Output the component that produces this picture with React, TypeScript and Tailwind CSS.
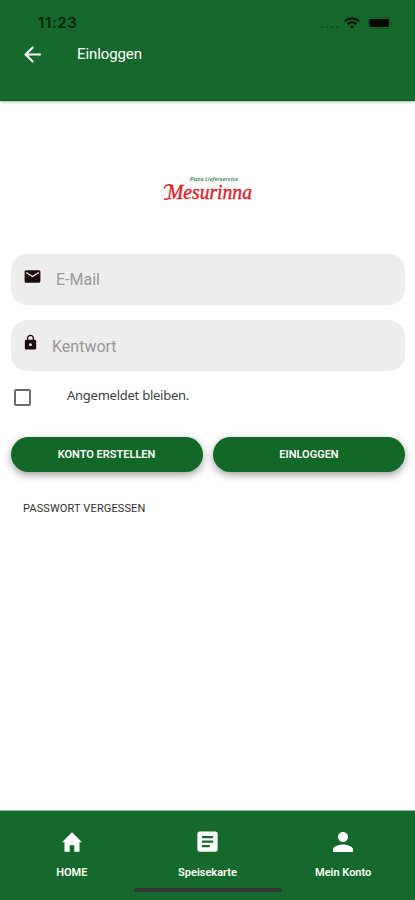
import React from 'react';
import { MdArrowBack, MdArticle, MdEmail, MdLock, MdPerson } from 'react-icons/md';

const StatusBar = () => (
  <div className="h-[37px] pt-[13px] pl-[38px] pr-[22px] flex items-start justify-between text-[#03210b]">
    <span className="text-[15px] leading-5 font-semibold font-['Inter',sans-serif] tracking-[0.6px]">11:23</span>
    <div className="flex items-center h-5">
      <div className="flex gap-[3px] mt-[7px] mr-[6px]">
        <span className="w-[2px] h-[2px] bg-[#0f5120]"></span>
        <span className="w-[2px] h-[2px] bg-[#0f5120]"></span>
        <span className="w-[2px] h-[2px] bg-[#0f5120]"></span>
        <span className="w-[2px] h-[2px] bg-[#0f5120]"></span>
      </div>
      <svg className="w-4 h-3 mr-2" viewBox="0 0 16 12" fill="none" stroke="#03150a" strokeWidth="2">
        <path d="M0.8 4.4C4.8 0.4 11.2 0.4 15.2 4.4" />
        <path d="M3.4 7.2C6 4.7 10 4.7 12.6 7.2" />
        <path d="M8 11.8L5.6 9.4C7 8.2 9 8.2 10.4 9.4Z" fill="#03150a" stroke="none" />
      </svg>
      <svg className="w-[25px] h-3" viewBox="0 0 25 12">
        <rect x="0.5" y="0.5" width="21.5" height="11" rx="3" fill="none" stroke="#11551f" />
        <rect x="1.5" y="2" width="19.5" height="8" rx="1.2" fill="#000802" />
        <path d="M23.2 4.3C24.6 5 24.6 7 23.2 7.7Z" fill="#0b4119" />
      </svg>
    </div>
  </div>
);

const Header = () => (
  <header className="h-[101px] shrink-0 bg-[#16692c] border-b border-[#0b5a20] shadow-[0_1px_3px_rgba(0,0,0,0.3)]">
    <StatusBar />
    <div className="h-[34px] pl-5 flex items-center text-white">
      <MdArrowBack className="w-[25px] h-[25px]" />
      <h1 className="ml-8 text-[15px] leading-5 tracking-[-0.1px]">Einloggen</h1>
    </div>
  </header>
);

const Logo = () => (
  <div className="w-[92px] mx-auto flex flex-col">
    <svg className="w-[92px] h-[9px] overflow-visible" viewBox="0 0 92 9">
      <text x="28" y="7" textLength="48" lengthAdjust="spacingAndGlyphs" fontFamily="Open Sans, sans-serif" fontSize="5.5" fontStyle="italic" fontWeight="600" fill="#2d7d4a">Pizza Lieferservice</text>
    </svg>
    <svg className="w-[92px] h-[23px] overflow-visible" viewBox="0 0 92 23">
      <text x="5" y="16" textLength="85" lengthAdjust="spacingAndGlyphs" fontFamily="Liberation Serif, serif" fontSize="20" fontStyle="italic" fill="#e01b2a" stroke="#e01b2a" strokeWidth="0.4">Mesurinna</text>
      <path d="M2 5.5C4 0.5 8.5 0.8 10 3.5M5.5 16C4 17 3 16.5 2 15.5" fill="none" stroke="#e01b2a" strokeWidth="1.2" />
    </svg>
  </div>
);

const tabs = [
  {
    label: 'HOME',
    icon: (
      <svg className="w-5 h-5" viewBox="0 0 20 20" fill="currentColor">
        <path d="M10 0.2L0 10.3H2.5V19.7H7.7V13.2H12.3V19.7H17.5V10.3H20Z" />
      </svg>
    ),
  },
  { label: 'Speisekarte', icon: <MdArticle className="w-[27px] h-[27px]" /> },
  { label: 'Mein Konto', icon: <MdPerson className="w-[30px] h-[30px]" /> },
];

const TabBar = () => (
  <nav className="h-[90px] shrink-0 bg-[#16692c] border-t border-[#8fb89a] flex flex-col text-white">
    <div className="grid grid-cols-3 pl-1 pr-1 pt-[15px] h-[77px]">
      {tabs.map((tab) => (
        <div key={tab.label} className="flex flex-col items-center">
          <div className="h-[31px] flex items-center">{tab.icon}</div>
          <span className="mt-2 text-[11px] leading-4 font-semibold whitespace-nowrap">{tab.label}</span>
        </div>
      ))}
    </div>
    <div className="w-[148px] h-1 mx-auto rounded-full bg-[#343638]"></div>
  </nav>
);

const App = () => {
  return (
    <div className="w-full h-[900px] flex flex-col bg-white font-['Roboto',sans-serif]">
      <Header />
      <main className="flex-1 px-[10px] pt-[73px]">
        <Logo />
        <form className="mt-12">
          <div className="h-[51px] ml-px pl-3 flex items-center rounded-[16px] bg-[#ededed]">
            <MdEmail className="w-[19px] h-[19px] mb-[7px] text-[#1d0c0c]" />
            <span className="ml-[14px] mt-px text-[16px] leading-5 text-[#989898]">E-Mail</span>
          </div>
          <div className="mt-[15px] ml-px h-[51px] pl-[11px] flex items-center rounded-[16px] bg-[#ededed]">
            <MdLock className="w-[17px] h-[17px] mb-[7px] text-[#1d0c0c]" />
            <span className="ml-[13px] mt-[3px] text-[16px] leading-5 text-[#989898]">Kentwort</span>
          </div>
          <div className="mt-[14px] h-[23px] pl-[4px] flex items-start">
            <span className="mt-1 w-[17px] h-[17px] rounded-[2px] border-2 border-[#6a6a6a]"></span>
            <span className="ml-[36px] text-[13px] leading-5 tracking-[-0.25px] text-[#404040] font-['Noto_Sans',sans-serif]">Angemeldet bleiben.</span>
          </div>
          <div className="mt-[29px] ml-px grid grid-cols-2 gap-[10px]">
            <button type="button" className="h-[35px] pt-[2px] pr-px rounded-full bg-[#116827] text-white text-[11px] font-semibold shadow-[0_3px_9px_rgba(0,0,0,0.38)]">KONTO ERSTELLEN</button>
            <button type="button" className="h-[35px] pt-[2px] rounded-full bg-[#116827] text-white text-[11px] font-semibold shadow-[0_3px_9px_rgba(0,0,0,0.38)]">EINLOGGEN</button>
          </div>
          <button type="button" className="mt-[29px] ml-[13px] block text-[11px] leading-4 tracking-[0.13px] text-[#303030]">PASSWORT VERGESSEN</button>
        </form>
      </main>
      <TabBar />
    </div>
  );
};

export default App;
